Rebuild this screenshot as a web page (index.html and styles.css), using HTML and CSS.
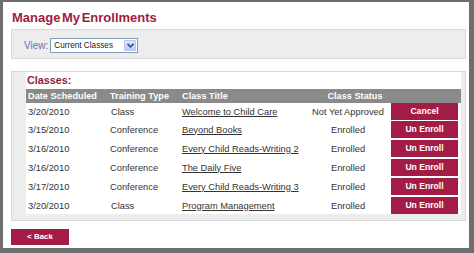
FILE: index.html
```html
<!DOCTYPE html>
<html lang="en">

<head>
    <meta charset="UTF-8">
    <meta name="viewport" content="width=device-width, initial-scale=1.0">
    <title>Manage My Enrollments</title>
    <link rel="stylesheet" href="styles.css">
</head>

<body>
    <div class="page">
        <h1 class="title">Manage My Enrollments</h1>

        <div class="view-bar">
            <span class="view-label">View:</span>
            <div class="select">
                <span class="select-text">Current Classes</span>
                <span class="select-btn">
                    <svg width="7" height="5" viewBox="0 0 7 5">
                        <path d="M0.5 0.8 L3.5 3.8 L6.5 0.8" fill="none" stroke="#3a4f86" stroke-width="1.6" />
                    </svg>
                </span>
            </div>
        </div>

        <div class="classes-box">
            <div class="classes-inner">
                <div class="classes-label">Classes:</div>
                <table class="classes">
                    <thead>
                        <tr>
                            <th class="c-date">Date Scheduled</th>
                            <th class="c-type">Training Type</th>
                            <th class="c-title">Class Title</th>
                            <th class="c-status status-head">Class Status</th>
                            <th class="c-action"></th>
                        </tr>
                    </thead>
                    <tbody>
                        <tr class="first">
                            <td>3/20/2010</td>
                            <td class="type-class">Class</td>
                            <td><a href="#">Welcome to Child Care</a></td>
                            <td class="status">Not Yet Approved</td>
                            <td class="action"><div class="btn">Cancel</div></td>
                        </tr>
                        <tr>
                            <td>3/15/2010</td>
                            <td>Conference</td>
                            <td><a href="#">Beyond Books</a></td>
                            <td class="status">Enrolled</td>
                            <td class="action"><div class="btn">Un Enroll</div></td>
                        </tr>
                        <tr>
                            <td>3/16/2010</td>
                            <td>Conference</td>
                            <td><a href="#">Every Child Reads-Writing 2</a></td>
                            <td class="status">Enrolled</td>
                            <td class="action"><div class="btn">Un Enroll</div></td>
                        </tr>
                        <tr>
                            <td>3/16/2010</td>
                            <td>Conference</td>
                            <td><a href="#">The Daily Five</a></td>
                            <td class="status">Enrolled</td>
                            <td class="action"><div class="btn">Un Enroll</div></td>
                        </tr>
                        <tr>
                            <td>3/17/2010</td>
                            <td>Conference</td>
                            <td><a href="#">Every Child Reads-Writing 3</a></td>
                            <td class="status">Enrolled</td>
                            <td class="action"><div class="btn">Un Enroll</div></td>
                        </tr>
                        <tr class="last">
                            <td>3/20/2010</td>
                            <td class="type-class">Class</td>
                            <td><a href="#">Program Management</a></td>
                            <td class="status">Enrolled</td>
                            <td class="action"><div class="btn">Un Enroll</div></td>
                        </tr>
                    </tbody>
                </table>
            </div>
        </div>

        <div class="btn back">&lt; Back</div>
    </div>
</body>

</html>
```

FILE: styles.css
```css
body {
    margin: 0;
    padding: 2px 5px 5px 3px;
    background-color: #6e6e6e;
    font-family: "Liberation Sans", Arial, sans-serif;
    color: #333;
}

.page {
    height: 246px;
    box-sizing: border-box;
    background-color: #fff;
    padding: 8px 3px 0 8px;
}

.title {
    margin: 0 0 3px 1px;
    font-size: 13px;
    line-height: 16px;
    font-weight: bold;
    word-spacing: -2px;
    color: #9e1c3b;
}

.view-bar {
    display: flex;
    align-items: center;
    gap: 2px;
    height: 15px;
    padding: 8px 0 5px 12px;
    background-color: #ededed;
    border: 1px solid #d8d8d8;
}

.view-label {
    font-size: 10px;
    color: #6474ab;
}

.select {
    display: flex;
    align-items: center;
    justify-content: space-between;
    box-sizing: border-box;
    width: 88px;
    height: 15px;
    padding: 0 1px 0 3px;
    background-color: #fff;
    border: 1px solid #7f9db9;
}

.select-text {
    font-size: 8.2px;
    color: #222;
}

.select-btn {
    display: flex;
    align-items: center;
    justify-content: center;
    width: 12px;
    height: 11px;
    box-sizing: border-box;
    background: linear-gradient(#dde7fc, #b9cdf7);
    border: 1px solid #b4c6ef;
    border-radius: 1px;
}

.classes-box {
    margin-top: 12px;
    padding: 0 4px 6px 14px;
    background-color: #ededed;
    border: 1px solid #d8d8d8;
}

.classes-inner {
    background-color: #fff;
}

.classes-label {
    height: 17px;
    line-height: 17px;
    padding-left: 1px;
    font-size: 10.8px;
    font-weight: bold;
    color: #8e1d3e;
}

.classes {
    width: 100%;
    border-collapse: collapse;
    table-layout: fixed;
    font-size: 9.3px;
}

.classes th {
    height: 14px;
    padding: 0 0 0 2px;
    background-color: #8a8a8a;
    color: #fff;
    font-size: 9.2px;
    font-weight: bold;
    text-align: left;
    white-space: nowrap;
}

.c-date {
    width: 80px;
}

.c-type {
    width: 70px;
}

.c-title {
    width: 124px;
}

.c-status {
    width: 66px;
}

.classes th.status-head {
    padding-left: 16px;
    text-align: center;
}

.classes td {
    height: 17px;
    padding: 0 0 2px 2px;
    white-space: nowrap;
}

.classes tr.first td {
    padding-bottom: 1px;
}

.classes tr.last td {
    padding-bottom: 0;
}

.classes td.type-class {
    padding-left: 3px;
}

.classes a {
    color: #333;
}

.classes td.status {
    text-align: center;
}

.classes td.action {
    padding: 0 3px 2px 3px;
}

.classes tr.first td.action {
    padding-bottom: 1px;
}

.classes tr.last td.action {
    padding-bottom: 0;
}

.btn {
    height: 17px;
    line-height: 17px;
    background-color: #a31c45;
    color: #fff;
    font-size: 8.6px;
    font-weight: bold;
    text-align: center;
}

.back {
    width: 58px;
    height: 16px;
    line-height: 16px;
    margin-top: 8px;
    font-size: 8px;
}
```
